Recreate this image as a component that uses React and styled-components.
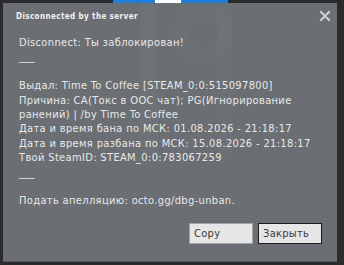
import React from "react";
import styled, { createGlobalStyle } from "styled-components";

const GlobalStyle = createGlobalStyle`
  html, body { margin: 0; padding: 0; }
  body {
    background: #2b2b2c;
    width: 344px;
    height: 265px;
    overflow: hidden;
  }
`;

const Page = styled.div`
  position: relative;
  height: 265px;
  box-sizing: border-box;
  padding: 3px 7px 3px 3px;
  display: flex;
`;

const BackLogo = styled.svg`
  position: absolute;
  left: 113px;
  top: 0;
`;

const Dialog = styled.div`
  position: relative;
  flex: 1;
  background: #6b6e72;
  border-bottom: 1px solid #55575b;
  display: flex;
  flex-direction: column;
  overflow: hidden;
  font-family: "DejaVu Sans Condensed", "DejaVu Sans", sans-serif;
`;

const Watermark = styled.svg`
  position: absolute;
  left: 0;
  top: 0;
  pointer-events: none;
`;

const TitleBar = styled.div`
  position: relative;
  display: flex;
  align-items: center;
  justify-content: space-between;
  height: 22px;
  padding: 2px 6px 0 13px;
`;

const Title = styled.div`
  color: #f2f2f2;
  font-weight: bold;
  font-size: 8px;
  letter-spacing: 0.4px;
`;

const CloseIcon = styled.svg`
  display: block;
`;

const Body = styled.div`
  position: relative;
  padding: 9px 10px 0 16px;
  color: #e8e9ea;
  font-size: 11px;
  line-height: 14.4px;
  letter-spacing: 0.35px;
  white-space: pre;
`;

const Line = styled.div`
  height: 14.4px;
`;

const Footer = styled.div`
  position: relative;
  margin-top: auto;
  display: flex;
  justify-content: flex-end;
  gap: 5px;
  padding: 0 15px 17px 0;
`;

const Button = styled.button`
  box-sizing: border-box;
  width: ${(p) => p.$w}px;
  height: 21px;
  padding: 0 0 0 4px;
  text-align: left;
  background: #e6e6e6;
  border: 1px solid ${(p) => (p.$primary ? "#1d1d1d" : "#a3a4a6")};
  color: #3a3a3a;
  font-family: "DejaVu Sans Condensed", "DejaVu Sans", sans-serif;
  font-size: 11px;
  letter-spacing: 0.3px;
  cursor: pointer;
`;

const lines = [
  "Disconnect: Ты заблокирован!",
  "___",
  "",
  "Выдал: Time To Coffee [STEAM_0:0:515097800]",
  "Причина: CA(Токс в ООС чат); PG(Игнорирование",
  "ранений) | /by Time To Coffee",
  "Дата и время бана по МСК: 01.08.2026 - 21:18:17",
  "Дата и время разбана по МСК: 15.08.2026 - 21:18:17",
  "Твой SteamID: STEAM_0:0:783067259",
  "___",
  "",
  "Подать апелляцию: octo.gg/dbg-unban.",
];

export default function App() {
  return (
    <>
      <GlobalStyle />
      <Page>
        <BackLogo width="115" height="3" viewBox="0 0 115 3">
          <rect x="0" y="0" width="115" height="3" fill="#1f7fd6" />
          <rect x="42" y="0" width="26" height="3" fill="#ffffff" />
        </BackLogo>
        <Dialog>
          <Watermark width="334" height="258" viewBox="0 0 334 258">
            <rect x="137" y="0" width="18" height="150" fill="#ffffff" opacity="0.025" />
            <circle cx="200" cy="30" r="22" fill="none" stroke="#ffffff" strokeWidth="14" opacity="0.02" />
            <rect x="215" y="0" width="14" height="150" fill="#ffffff" opacity="0.015" />
          </Watermark>
          <TitleBar>
            <Title>Disconnected by the server</Title>
            <CloseIcon width="12" height="12" viewBox="0 0 12 12">
              <path d="M2 2 L10 10 M10 2 L2 10" stroke="#d0d1d2" strokeWidth="2" strokeLinecap="square" />
            </CloseIcon>
          </TitleBar>
          <Body>
            {lines.map((t, i) => (
              <Line key={i}>{t}</Line>
            ))}
          </Body>
          <Footer>
            <Button $w={64}>Copy</Button>
            <Button $w={64} $primary>Закрыть</Button>
          </Footer>
        </Dialog>
      </Page>
    </>
  );
}
